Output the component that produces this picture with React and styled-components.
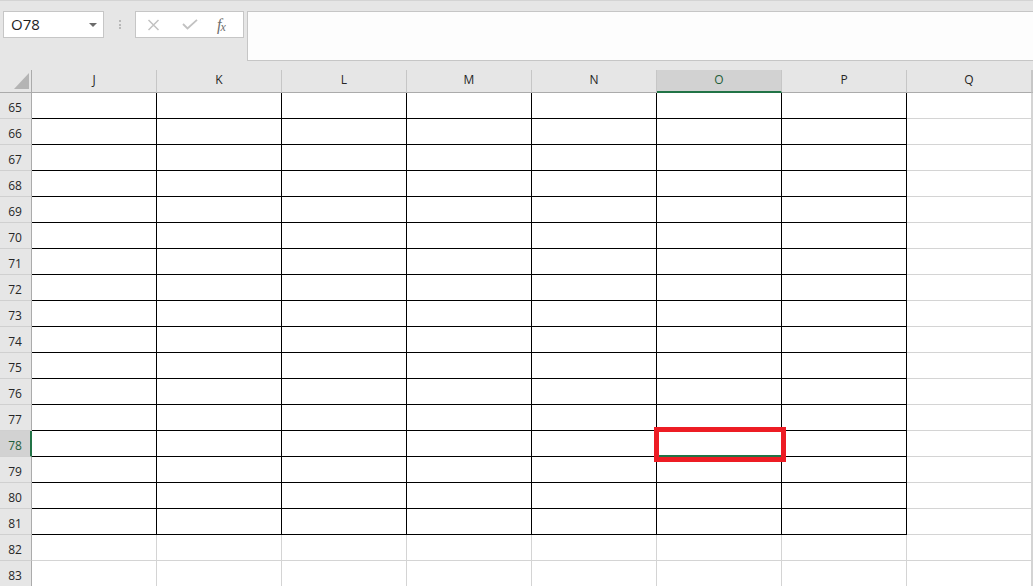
import React from "react";
import styled, { createGlobalStyle } from "styled-components";

const GlobalStyle = createGlobalStyle`
  * { box-sizing: border-box; }
  body {
    margin: 0;
    background: #ffffff;
    font-family: "Open Sans", "Noto Sans", sans-serif;
    overflow: hidden;
  }
`;

const Page = styled.div`
  width: 1033px;
  height: 586px;
  overflow: hidden;
  background: #ffffff;
`;

/* formula bar */
const TopBar = styled.div`
  height: 70px;
  background: #e6e6e6;
  border-top: 1px solid #d4d4d4;
  display: flex;
  align-items: flex-start;
  padding: 10px 0 0 3px;
`;

const NameBox = styled.div`
  width: 101px;
  height: 27px;
  background: #ffffff;
  border: 1px solid #c6c6c6;
  display: flex;
  align-items: center;
  justify-content: space-between;
  padding: 0 6px 1px 7px;
  font-size: 15px;
  color: #1e1e1e;
`;

const Arrow = styled.span`
  width: 0;
  height: 0;
  border-left: 4px solid transparent;
  border-right: 4px solid transparent;
  border-top: 4px solid #6b6b6b;
  margin-top: 1px;
`;

const Dots = styled.div`
  width: 31px;
  height: 27px;
  display: flex;
  flex-direction: column;
  align-items: center;
  justify-content: center;
  gap: 1.5px;
  span {
    width: 2px;
    height: 2px;
    background: #b8b8b8;
  }
`;

const FxBox = styled.div`
  width: 109px;
  height: 27px;
  background: #ffffff;
  border: 1px solid #c6c6c6;
  display: flex;
  align-items: center;
  padding-left: 11px;
  gap: 22px;
`;

const Fx = styled.span`
  font-family: "Liberation Serif", serif;
  font-style: italic;
  font-size: 16px;
  color: #6e6e6e;
  letter-spacing: -1px;
  line-height: 1;
  margin-left: -3px;
  sub {
    font-size: 12px;
    vertical-align: -1px;
  }
`;

const FormulaInput = styled.div`
  flex: 1;
  margin-left: 3px;
  margin-right: -1px;
  height: 50px;
  background: #fdfdfd;
  border: 1px solid #c6c6c6;
`;

/* sheet */
const Sheet = styled.div`
  display: grid;
  grid-template-columns: 32px repeat(8, 125px) 1fr;
  grid-template-rows: 23px repeat(19, 26px);
`;

const Corner = styled.div`
  background: #e6e6e6;
  border-right: 1px solid #ababab;
  border-bottom: 1px solid #ababab;
  display: flex;
  align-items: flex-end;
  justify-content: flex-end;
  padding: 0 2px 3px 0;
`;

const ColHead = styled.div`
  background: ${(p) => (p.$active ? "#d2d2d2" : "#e6e6e6")};
  border-right: 1px solid #c6c6c6;
  border-bottom: ${(p) => (p.$active ? "2px solid #217346" : "1px solid #ababab")};
  display: flex;
  align-items: center;
  justify-content: center;
  padding-bottom: ${(p) => (p.$active ? "2px" : "3px")};
  font-size: 12px;
  color: ${(p) => (p.$active ? "#1e5e3a" : "#262626")};
`;

const RowHead = styled.div`
  background: ${(p) => (p.$active ? "#d2d2d2" : "#e6e6e6")};
  border-right: ${(p) => (p.$active ? "2px solid #217346" : "1px solid #ababab")};
  border-bottom: 1px solid #d0d0d0;
  display: flex;
  align-items: flex-end;
  justify-content: center;
  padding: 0 ${(p) => (p.$active ? "0" : "1px")} 2px 0;
  font-size: 12px;
  color: ${(p) => (p.$active ? "#1e5e3a" : "#262626")};
`;

const Cell = styled.div`
  position: relative;
  border-right: 1px solid ${(p) => (p.$boxed ? "#000000" : "#d4d4d4")};
  border-bottom: 1px solid ${(p) => (p.$boxed ? "#000000" : "#d4d4d4")};
`;

const Selection = styled.div`
  position: absolute;
  left: -2px;
  top: -1px;
  right: -2px;
  bottom: -1px;
  border: 2px solid #217346;
`;

const Marker = styled.div`
  position: absolute;
  left: -3px;
  top: -4px;
  width: 132px;
  height: 35px;
  border: 5px solid #ed1c24;
  z-index: 2;
`;

const columns = ["J", "K", "L", "M", "N", "O", "P", "Q"];
const rows = Array.from({ length: 19 }, (_, i) => 65 + i);
const activeCol = "O";
const activeRow = 78;

const CloseIcon = () => (
  <svg width="13" height="12" viewBox="0 0 13 12">
    <path d="M1.5 1 L11.5 11 M11.5 1 L1.5 11" stroke="#c2c2c2" strokeWidth="1.5" fill="none" />
  </svg>
);

const CheckIcon = () => (
  <svg width="16" height="11" viewBox="0 0 16 11">
    <path d="M1 5 L5.5 9.5 L15 0.8" stroke="#c2c2c2" strokeWidth="1.8" fill="none" />
  </svg>
);

const App = () => {
  return (
    <Page>
      <GlobalStyle />
      <TopBar>
        <NameBox>
          O78
          <Arrow />
        </NameBox>
        <Dots>
          <span />
          <span />
          <span />
        </Dots>
        <FxBox>
          <CloseIcon />
          <CheckIcon />
          <Fx>
            f<sub>x</sub>
          </Fx>
        </FxBox>
        <FormulaInput />
      </TopBar>
      <Sheet>
        <Corner>
          <svg width="15" height="16" viewBox="0 0 15 16">
            <polygon points="15,0 15,16 0,16" fill="#b4b4b4" />
          </svg>
        </Corner>
        {columns.map((c) => (
          <ColHead key={c} $active={c === activeCol}>
            {c}
          </ColHead>
        ))}
        <ColHead />
        {rows.map((r) => (
          <React.Fragment key={r}>
            <RowHead $active={r === activeRow}>{r}</RowHead>
            {columns.map((c) => {
              const boxed = r <= 81 && c !== "Q";
              const active = r === activeRow && c === activeCol;
              return (
                <Cell key={c} $boxed={boxed}>
                  {active && (
                    <>
                      <Selection />
                      <Marker />
                    </>
                  )}
                </Cell>
              );
            })}
            <Cell />
          </React.Fragment>
        ))}
      </Sheet>
    </Page>
  );
};

export default App;
